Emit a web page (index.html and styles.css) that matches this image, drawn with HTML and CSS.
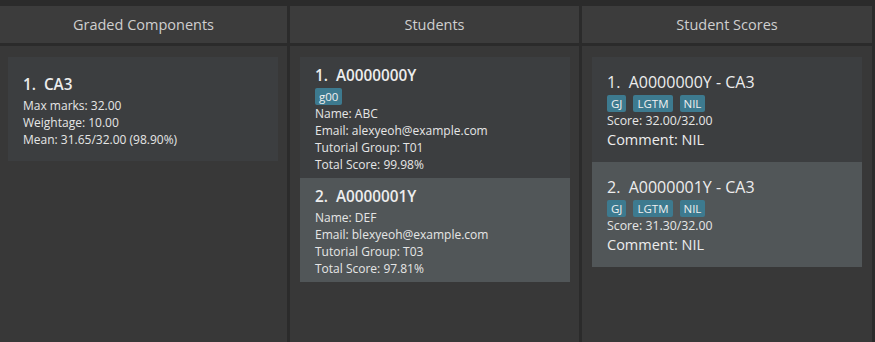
FILE: index.html
```html
<!DOCTYPE html>
<html lang="en">
<head>
    <meta charset="UTF-8">
    <meta name="viewport" content="width=device-width, initial-scale=1.0">
    <title>Grades</title>
    <link rel="stylesheet" href="styles.css">
</head>
<body>
    <div class="main">
        <div class="header">Graded Components</div>
        <div class="header">Students</div>
        <div class="header">Student Scores</div>

        <div class="panel panel-left">
            <div class="card card-component">
                <div class="title">1.&nbsp; CA3</div>
                <div class="line">Max marks: 32.00</div>
                <div class="line">Weightage: 10.00</div>
                <div class="line">Mean: 31.65/32.00 (98.90%)</div>
            </div>
        </div>

        <div class="panel panel-mid">
            <div class="card card-student">
                <div class="title">1.&nbsp; A0000000Y</div>
                <div class="tags"><span class="tag">g00</span></div>
                <div class="line">Name: ABC</div>
                <div class="line">Email: alexyeoh@example.com</div>
                <div class="line">Tutorial Group: T01</div>
                <div class="line">Total Score: 99.98%</div>
            </div>
            <div class="card card-student selected">
                <div class="title">2.&nbsp; A0000001Y</div>
                <div class="line">Name: DEF</div>
                <div class="line">Email: blexyeoh@example.com</div>
                <div class="line">Tutorial Group: T03</div>
                <div class="line">Total Score: 97.81%</div>
            </div>
        </div>

        <div class="panel panel-right">
            <div class="card card-score">
                <div class="title title-score">1.&nbsp; A0000000Y - CA3</div>
                <div class="tags"><span class="tag">GJ</span><span class="tag">LGTM</span><span class="tag">NIL</span></div>
                <div class="line score">Score: 32.00/32.00</div>
                <div class="comment">Comment: NIL</div>
            </div>
            <div class="card card-score selected">
                <div class="title title-score">2.&nbsp; A0000001Y - CA3</div>
                <div class="tags"><span class="tag">GJ</span><span class="tag">LGTM</span><span class="tag">NIL</span></div>
                <div class="line score">Score: 31.30/32.00</div>
                <div class="comment">Comment: NIL</div>
            </div>
        </div>
    </div>
</body>
</html>
```

FILE: styles.css
```css
html, body { margin: 0; padding: 0; height: 100%; }
body { background-color: #2b2b2b; font-family: "Open Sans", "Noto Sans", sans-serif; color: #e8e8e8; overflow: hidden; }
.main { display: grid; grid-template-columns: 287px 289px 290px; grid-template-rows: 37px 1fr; column-gap: 3px; row-gap: 3px; padding-top: 6px; height: 336px; width: 872px; }
.header { background-color: #3c3c3c; color: #cfcfcf; font-size: 14.5px; display: flex; align-items: center; justify-content: center; }
.panel { background-color: #383838; padding-top: 11px; }
.panel-left { padding-left: 8px; padding-right: 9px; }
.panel-mid { padding-left: 10px; padding-right: 9px; }
.panel-right { padding-left: 10px; padding-right: 10px; }
.card { background-color: #3c3e40; padding: 0 15px; }
.card-component { padding-top: 15px; padding-bottom: 13px; }
.card-student { padding-top: 6px; padding-bottom: 5px; }
.card-score { padding-top: 13px; padding-bottom: 11px; }
.selected { background-color: #515658; }
.title { font-size: 15.3px; font-weight: 600; line-height: 25px; color: #ededed; }
.title-score { font-size: 16px; font-weight: 500; }
.line { font-size: 12px; line-height: 17px; color: #e6e6e6; }
.score { font-size: 12.3px; }
.comment { font-size: 14.5px; line-height: 22px; color: #ededed; }
.tags { display: flex; gap: 7px; }
.tag { background-color: #3d7a8f; color: #f0f0f0; font-size: 11.5px; line-height: 17px; padding: 0 4px; border-radius: 2px; }
```
